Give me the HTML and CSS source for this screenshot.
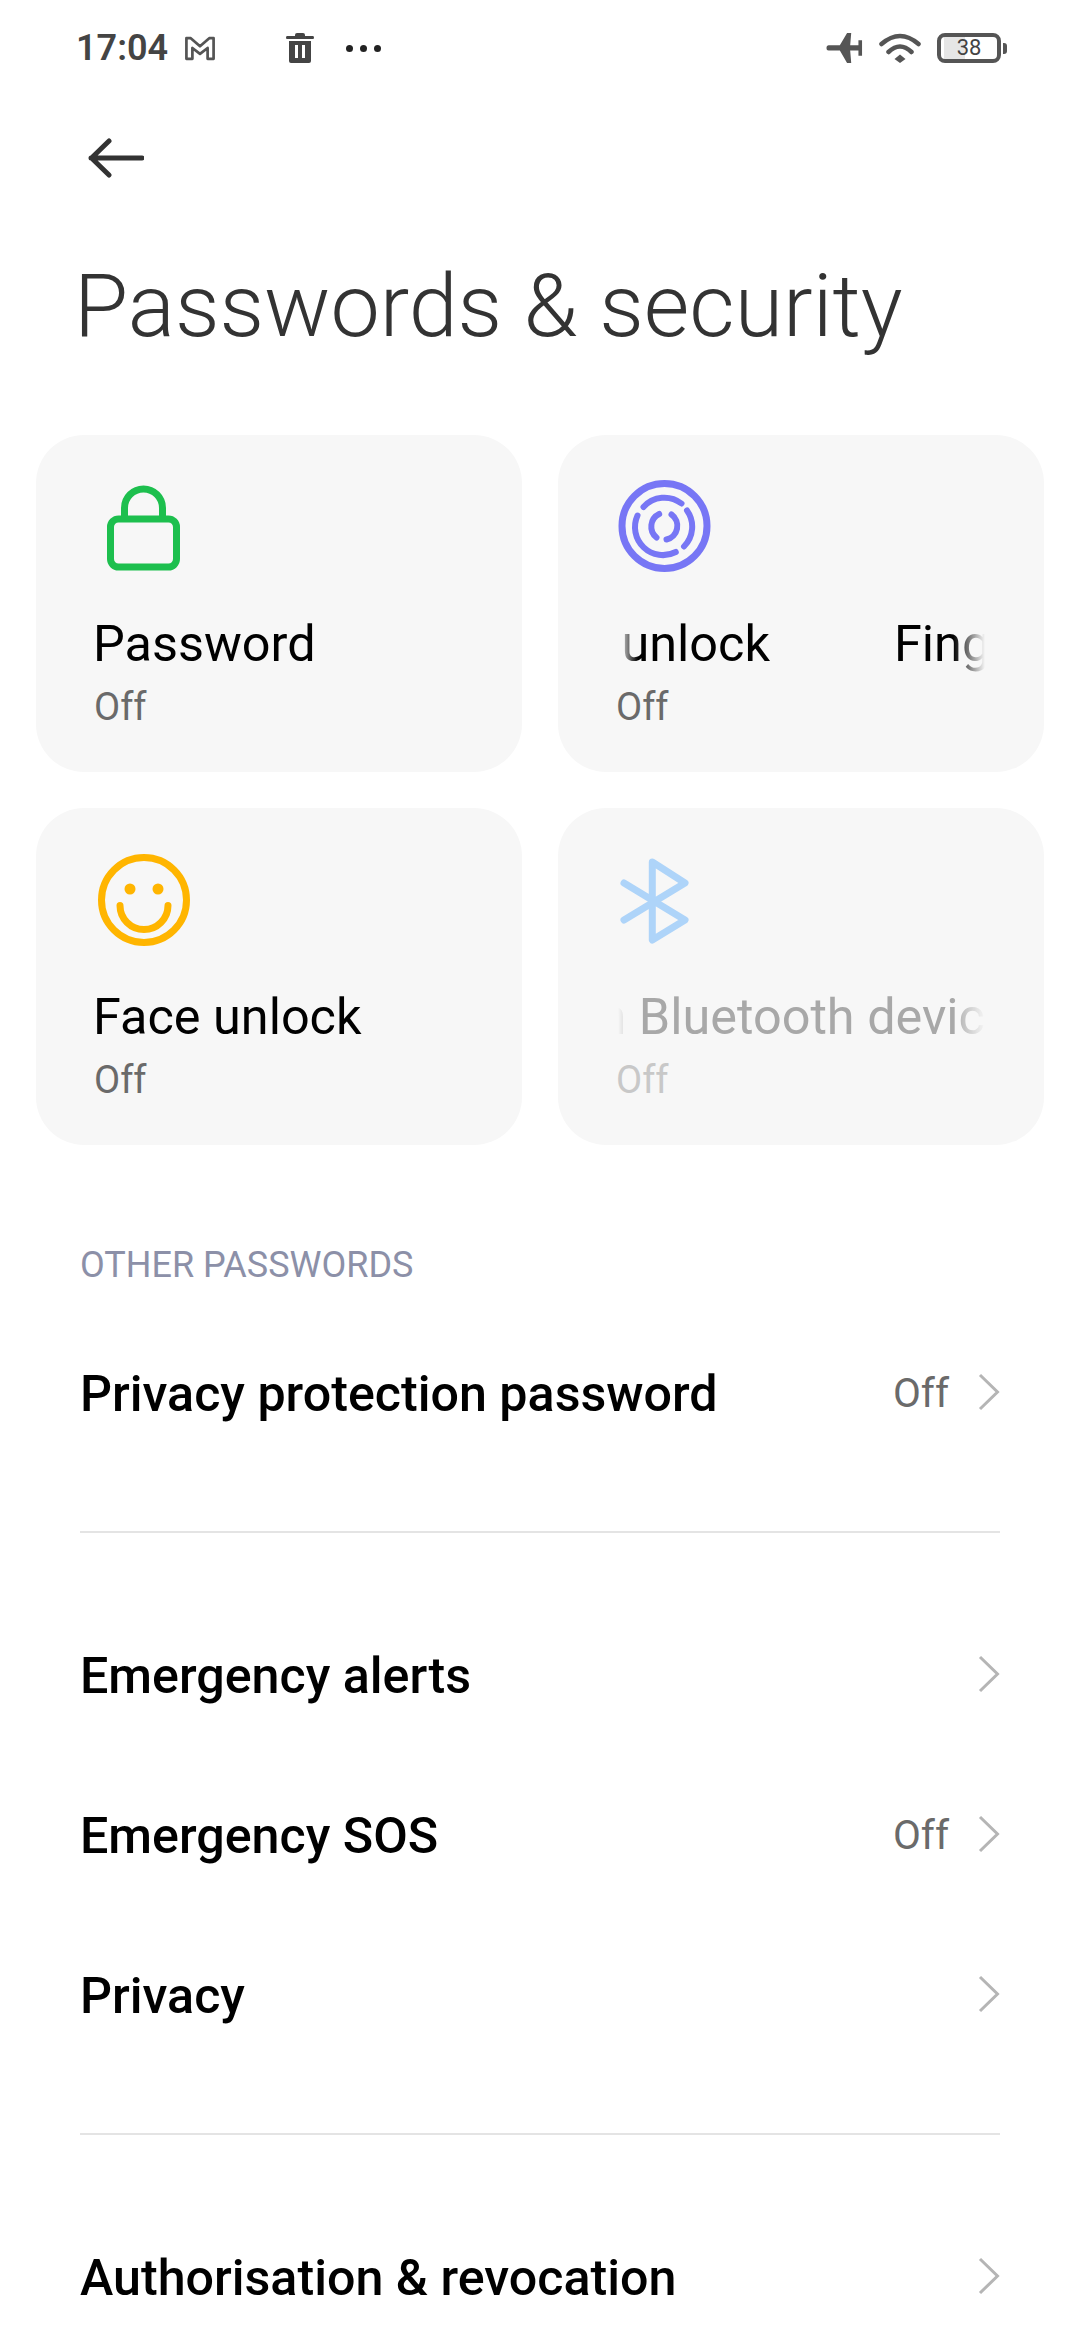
FILE: index.html
```html
<!DOCTYPE html>
<html lang="en">

<head>
  <meta charset="UTF-8">
  <meta name="viewport" content="width=device-width, initial-scale=1.0">
  <title>Passwords &amp; security</title>
  <link rel="stylesheet" href="styles.css">
</head>

<body>
  <div class="statusbar">
    <span class="time">17:04</span>
    <svg class="ic-mail" viewBox="0 0 29 23"><path d="M2 2H6L14.5 9.5L23 2H27V21H21.5V11L14.5 16.5L7.5 11V21H2Z" fill="none" stroke="#555" stroke-width="2.5" stroke-linejoin="round"/></svg>
    <svg class="ic-trash" viewBox="0 0 28 30"><path fill="#444" d="M9 2Q9 0 11 0H17Q19 0 19 2V3H27Q28 3 28 4.500Q28 6 27 6H1Q0 6 0 4.500Q0 3 1 3H9ZM3 8H25V28Q25 30 23 30H5Q3 30 3 28ZM9 12V25H12V12ZM16 12V25H19V12Z" fill-rule="evenodd"/></svg>
    <span class="dots"><i></i><i></i><i></i></span>
    <span class="status-right">
      <svg class="ic-plane" viewBox="0 0 35 31"><path fill="#555" d="M2 12.800H13L20 1H24L23 12.800H31V8H34.500V23H31V18H23L24 30H20L13 18H2Q0 18 0 15.400Q0 12.800 2 12.800Z"/></svg>
      <svg class="ic-wifi" viewBox="0 0 42 30"><path d="M2.500 11Q21 -5 39.500 11M9.500 19Q21 8 32.500 19" fill="none" stroke="#555" stroke-width="4.500" stroke-linecap="round"/><path fill="#555" d="M21 21.500L26.500 26L21 30L15.500 26Z"/></svg>
      <span class="battery">38</span><span class="battery-nub"></span>
    </span>
  </div>

  <div class="topbar">
    <svg class="ic-back" viewBox="0 0 56 40"><path d="M3 20H54M21 3L3.500 20L21 37" fill="none" stroke="#333" stroke-width="5" stroke-linecap="round" stroke-linejoin="round"/></svg>
  </div>

  <h1 class="page-title">Passwords &amp; security</h1>

  <div class="cards">
    <div class="card">
      <svg class="card-icon" viewBox="0 0 96 96">
        <rect x="14.500" y="40" width="66" height="48" rx="8" fill="none" stroke="#1dbf4e" stroke-width="7"/>
        <path d="M28.500 39V29A19 19 0 0 1 66.500 29V39" fill="none" stroke="#1dbf4e" stroke-width="7"/>
      </svg>
      <div class="card-title">Password</div>
      <div class="card-sub">Off</div>
    </div>

    <div class="card">
      <svg class="card-icon" viewBox="0 0 96 96">
        <g transform="translate(46.500 47)" fill="none" stroke="#7776f5" stroke-linecap="round">
          <circle r="42.500" stroke-width="7"/>
          <g stroke-width="6">
            <path d="M-21 -19A28 28 0 0 1 17 -22.500"/>
            <path d="M22.500 -15.500A28 28 0 0 1 19.500 20.500"/>
            <path d="M11.300 26A28 28 0 0 1 -27 -10.500"/>
            <path d="M-5.300 -12A14 14 0 0 0 -8 11.500"/>
            <path d="M7 -11.500A14 14 0 0 1 2 13.500"/>
          </g>
        </g>
      </svg>
      <div class="card-title marquee marquee-finger"><span class="marquee-in"><span>Fingerprint unlock</span><span>Fingerprint unlock</span></span></div>
      <div class="card-sub">Off</div>
    </div>

    <div class="card">
      <svg class="card-icon" viewBox="0 0 96 96">
        <circle cx="48" cy="48" r="42.500" fill="none" stroke="#ffb500" stroke-width="7"/>
        <circle cx="34" cy="37" r="5.500" fill="#ffb500"/>
        <circle cx="62" cy="37" r="5.500" fill="#ffb500"/>
        <path d="M24 53.500A24 24 0 0 0 72 53.500" fill="none" stroke="#ffb500" stroke-width="7" stroke-linecap="round"/>
      </svg>
      <div class="card-title">Face unlock</div>
      <div class="card-sub">Off</div>
    </div>

    <div class="card disabled">
      <svg class="card-icon" viewBox="0 0 96 96">
        <path d="M6 31L67 68L34.300 88V10L67 31L6 68" fill="none" stroke="#aed4f9" stroke-width="7" stroke-linecap="round" stroke-linejoin="round"/>
      </svg>
      <div class="card-title marquee marquee-bt"><span class="marquee-in"><span>Unlock with Bluetooth device</span></span></div>
      <div class="card-sub">Off</div>
    </div>
  </div>

  <div class="section-label">OTHER PASSWORDS</div>

  <div class="row">
    <span class="row-title">Privacy protection password</span>
    <span class="row-value">Off</span>
    <svg class="chevron" viewBox="0 0 22 38"><path d="M2 2L19.500 19L2 36" fill="none" stroke="#b5b5b5" stroke-width="3"/></svg>
  </div>

  <div class="divider"></div>

  <div class="row">
    <span class="row-title">Emergency alerts</span>
    <svg class="chevron" viewBox="0 0 22 38"><path d="M2 2L19.500 19L2 36" fill="none" stroke="#b5b5b5" stroke-width="3"/></svg>
  </div>
  <div class="row">
    <span class="row-title">Emergency SOS</span>
    <span class="row-value">Off</span>
    <svg class="chevron" viewBox="0 0 22 38"><path d="M2 2L19.500 19L2 36" fill="none" stroke="#b5b5b5" stroke-width="3"/></svg>
  </div>
  <div class="row">
    <span class="row-title">Privacy</span>
    <svg class="chevron" viewBox="0 0 22 38"><path d="M2 2L19.500 19L2 36" fill="none" stroke="#b5b5b5" stroke-width="3"/></svg>
  </div>

  <div class="divider"></div>

  <div class="row">
    <span class="row-title">Authorisation &amp; revocation</span>
    <svg class="chevron" viewBox="0 0 22 38"><path d="M2 2L19.500 19L2 36" fill="none" stroke="#b5b5b5" stroke-width="3"/></svg>
  </div>
</body>

</html>
```

FILE: styles.css
```css
* {
  margin: 0;
  box-sizing: border-box;
}

html,
body {
  height: 2340px;
  overflow: hidden;
}

body {
  font-family: Roboto, sans-serif;
  background: white;
  color: black;
}

svg {
  display: block;
  flex: none;
}

/* status bar */
.statusbar {
  display: flex;
  align-items: center;
  height: 96px;
  padding: 0 76px;
}

.time {
  font-size: 36px;
  font-weight: 600;
  color: #444;
  width: 108px;
}

.ic-mail {
  width: 32px;
  height: 25px;
}

.ic-trash {
  width: 28px;
  height: 30px;
  margin-left: 70px;
}

.dots {
  display: flex;
  gap: 7px;
  margin-left: 32px;
}

.dots i {
  width: 7px;
  height: 7px;
  border-radius: 100%;
  background: #222;
}

.status-right {
  display: flex;
  align-items: center;
  margin-left: auto;
  margin-right: -3px;
}

.ic-plane {
  width: 37px;
  height: 32px;
}

.ic-wifi {
  width: 42px;
  height: 30px;
  margin-left: 16px;
}

.battery {
  width: 64px;
  height: 30px;
  margin-left: 16px;
  border: 4px solid #555;
  border-radius: 8px;
  background: linear-gradient(90deg, #e6e6e6 21px, white 21px) 3px 0 no-repeat;
  font-size: 22px;
  line-height: 22px;
  text-align: center;
  color: #444;
}

.battery-nub {
  width: 4px;
  height: 11px;
  margin-left: 2px;
  border-radius: 0 3px 3px 0;
  background: #555;
}

/* header */
.topbar {
  height: 124px;
  padding-left: 88px;
  display: flex;
  align-items: center;
}

.ic-back {
  width: 56px;
  height: 40px;
}

.page-title {
  height: 215px;
  padding: 36px 0 0 74px;
  font-size: 88px;
  line-height: 100px;
  font-weight: 300;
  color: #333;
}

/* cards */
.cards {
  display: grid;
  grid-template-columns: 486px 486px;
  grid-auto-rows: 337px;
  gap: 36px;
  padding-left: 36px;
}

.card {
  background: #f7f7f7;
  border-radius: 48px;
  padding: 44px 0 0 60px;
}

.card-icon {
  width: 96px;
  height: 96px;
}

.card-title {
  margin-top: 37px;
  margin-left: -3px;
  font-size: 50.4px;
  line-height: 64px;
  white-space: nowrap;
}

.card-sub {
  margin-top: 7px;
  margin-left: -2px;
  font-size: 38px;
  line-height: 48px;
  color: #6a6a6a;
}

.marquee {
  width: 370px;
  overflow: hidden;
  -webkit-mask-image: linear-gradient(90deg, transparent 3px, black 23px, black 338px, transparent 370px);
  mask-image: linear-gradient(90deg, transparent 3px, black 23px, black 338px, transparent 370px);
}

.marquee-in {
  display: inline-flex;
  gap: 124px;
}

.marquee-finger .marquee-in {
  margin-left: -248px;
}

.marquee-bt .marquee-in {
  margin-left: -249px;
}

.disabled .card-title {
  color: #a8a8a8;
}

.disabled .card-sub {
  color: #c8c8c8;
}

/* list */
.section-label {
  margin-top: 86px;
  margin-bottom: 13px;
  padding-left: 80px;
  font-size: 36px;
  line-height: 68px;
  color: #8c90a8;
}

.row {
  display: flex;
  align-items: center;
  height: 160px;
  padding: 0 80px;
}

.row-title {
  padding-top: 2px;
  font-size: 50.2px;
  font-weight: 500;
  margin-right: auto;
}

.row-value {
  padding-top: 2px;
  font-size: 40.5px;
  color: #6a6a6a;
  margin-right: 29px;
}

.chevron {
  width: 22px;
  height: 38px;
}

.divider {
  height: 2px;
  margin: 59px 80px 61px;
  background: #e4e4e4;
}
```
